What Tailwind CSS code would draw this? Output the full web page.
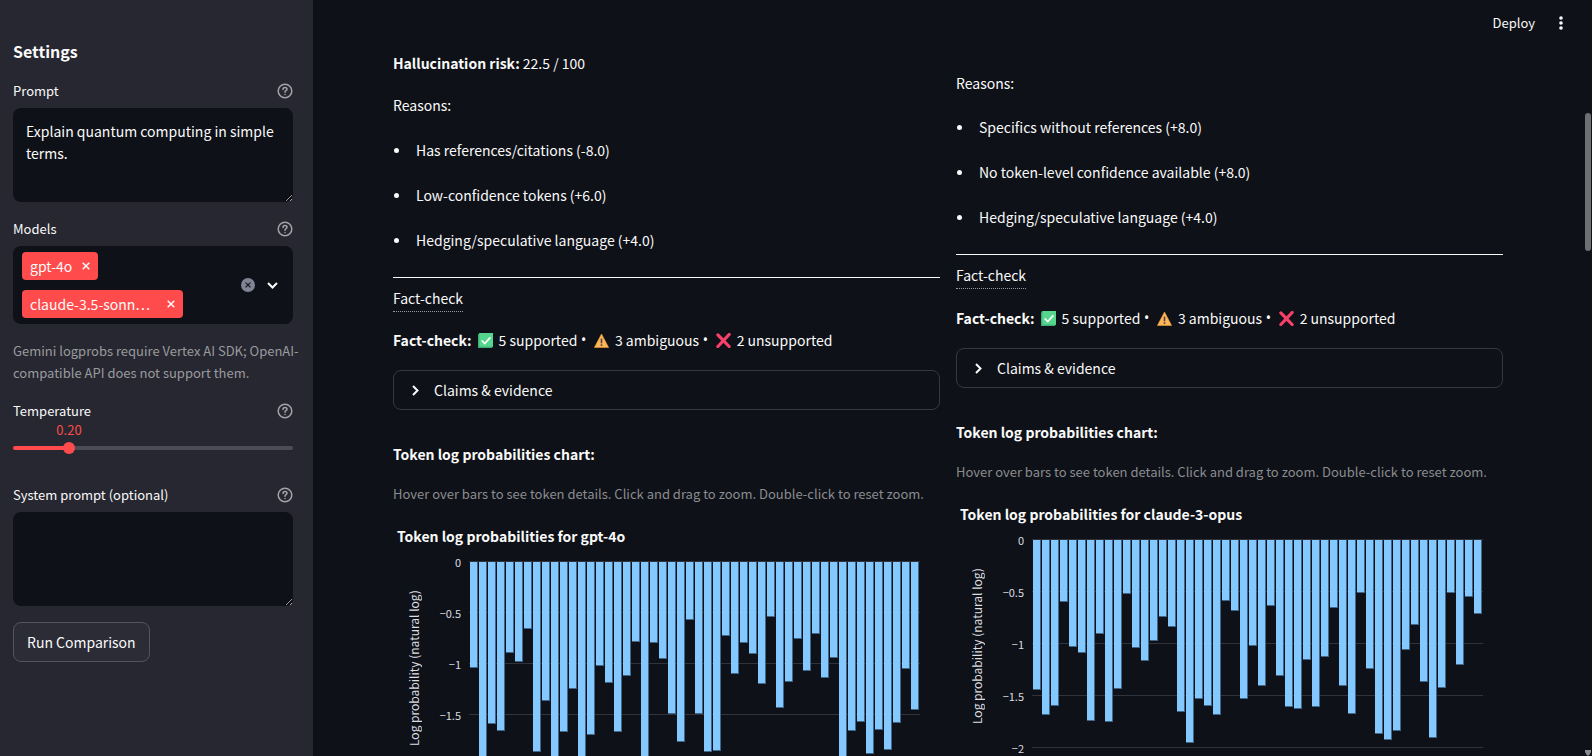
<!DOCTYPE html>
<html lang="en">
<head>
<meta charset="utf-8">
<meta name="viewport" content="width=device-width, initial-scale=1">
<title>Model comparison</title>
<script src="https://cdn.jsdelivr.net/npm/@tailwindcss/browser@4"></script>
</head>
<body class="flex h-screen overflow-hidden bg-[#0e1117] font-['Noto_Sans_CJK_SC','Noto_Sans',sans-serif] text-[14px] leading-[22px] text-[#fafafa]">

<svg class="hidden" aria-hidden="true">
  <symbol id="help" viewBox="0 0 16 16" fill="none" stroke="currentColor" stroke-width="1.5" stroke-linecap="round">
    <circle cx="8" cy="8" r="6.8"/><path d="M6 6.4C6 5.1 6.9 4.5 8 4.5s2 .7 2 1.8C10 7.7 8 7.7 8 9.2"/><path d="M8 11.4v.1"/>
  </symbol>
  <symbol id="cross" viewBox="0 0 8 8" fill="none" stroke="currentColor" stroke-width="1.5"><path d="M.7.7l6.6 6.6M7.3.7L.7 7.3"/></symbol>
  <symbol id="chevron" viewBox="0 0 7 11" fill="none" stroke="currentColor" stroke-width="2"><path d="M1 1l4.5 4.5L1 10"/></symbol>
  <symbol id="ok" viewBox="0 0 16 16"><path d="M1.5 0H16v14.5L14.5 16H0V1.5z" fill="#3fae78"/><path d="M1.5 0H16v14.5H1.5z" fill="#56d68d"/><path d="M4 8l3.2 3.2L13.2 4.6" fill="none" stroke="#fff" stroke-width="1.8"/></symbol>
  <symbol id="warn" viewBox="0 0 16 16"><path d="M8 1l7.6 14.5H.4z" fill="#ffb657" stroke="#f5a33f" stroke-width=".6"/><path d="M8 6v5" stroke="#4c4350" stroke-width="1.7"/><path d="M8 12v1.8" stroke="#4c4350" stroke-width="1.7"/></symbol>
  <symbol id="bad" viewBox="0 0 16 16"><path d="M2 2l12 12.4M14 1.6L2 14.4" stroke="#f9406b" stroke-width="3.4" stroke-linecap="round"/></symbol>
</svg>

<aside class="w-[313px] shrink-0 bg-[#262730] px-[13px] pt-[39px] pr-5">
  <h2 class="mb-[17px] text-[16px] leading-6 font-bold">Settings</h2>

  <div class="mb-[6px] flex h-[22px] items-center justify-between text-[13px]">
    <label for="prompt">Prompt</label>
    <button type="button" aria-label="Help for prompt" class="text-[#a3a4aa]"><svg class="size-4"><use href="#help"/></svg></button>
  </div>
  <textarea id="prompt" class="block h-[94px] w-full resize-y rounded-lg bg-[#0e1117] px-[13px] py-3 text-[14px] leading-[22px] [color-scheme:dark]">Explain quantum computing in simple terms.</textarea>

  <div class="mt-4 mb-[6px] flex h-[22px] items-center justify-between text-[13px]">
    <label for="models">Models</label>
    <button type="button" aria-label="Help for models" class="text-[#a3a4aa]"><svg class="size-4"><use href="#help"/></svg></button>
  </div>
  <div class="flex h-[78px] items-center rounded-lg bg-[#0e1117] pr-[15px] pl-[9px]">
    <div class="flex flex-1 flex-col items-start gap-[10px]">
      <span class="flex h-7 items-center gap-[10px] rounded bg-[#ff4b4b] px-2">gpt-4o<button type="button" aria-label="Remove gpt-4o"><svg class="size-2"><use href="#cross"/></svg></button></span>
      <span class="flex h-7 items-center gap-[17px] rounded bg-[#ff4b4b] px-2">claude-3.5-sonn…<button type="button" aria-label="Remove claude-3.5-sonnet"><svg class="size-2"><use href="#cross"/></svg></button></span>
    </div>
    <input id="models" role="combobox" aria-expanded="false" class="w-px bg-transparent outline-none">
    <button type="button" aria-label="Clear all" class="mr-[11px] flex size-[14px] items-center justify-center rounded-full bg-[#808495] text-[#0e1117]"><svg class="size-[6px]"><use href="#cross"/></svg></button>
    <button type="button" aria-label="Open list" class="flex w-3 justify-center"><svg class="h-[11px] w-[7px] rotate-90"><use href="#chevron"/></svg></button>
  </div>

  <p class="mt-4 text-[13px] leading-[22px] whitespace-nowrap text-[#9a9b9f]">Gemini logprobs require Vertex AI SDK; OpenAI-<br>compatible API does not support them.</p>

  <div class="mt-4 flex h-[22px] items-center justify-between text-[13px]">
    <label for="temp">Temperature</label>
    <button type="button" aria-label="Help for temperature" class="text-[#a3a4aa]"><svg class="size-4"><use href="#help"/></svg></button>
  </div>
  <div class="grid grid-cols-5 text-[13px] leading-4 text-[#ff4b4b]"><output for="temp" class="col-span-2 text-center">0.20</output></div>
  <div class="mt-1 grid h-3 items-center">
    <div class="col-start-1 row-start-1 h-1 rounded bg-[linear-gradient(to_right,#ff4b4b_20%,#4b4c56_20%)]"></div>
    <input id="temp" type="range" min="0" max="1" step="0.05" value="0.2" class="col-start-1 row-start-1 -mx-[6px] h-3 w-[calc(100%+12px)] appearance-none bg-transparent [&::-webkit-slider-thumb]:size-3 [&::-webkit-slider-thumb]:appearance-none [&::-webkit-slider-thumb]:rounded-full [&::-webkit-slider-thumb]:bg-[#ff4b4b]">
  </div>

  <div class="mt-[30px] mb-[6px] flex h-[22px] items-center justify-between text-[13px]">
    <label for="system">System prompt (optional)</label>
    <button type="button" aria-label="Help for system prompt" class="text-[#a3a4aa]"><svg class="size-4"><use href="#help"/></svg></button>
  </div>
  <textarea id="system" class="block h-[94px] w-full resize-y rounded-lg bg-[#0e1117] px-[13px] py-3 [color-scheme:dark]"></textarea>

  <button type="button" class="mt-4 h-10 rounded-lg border border-[#53545c] bg-[#2b2c36] px-[13px]">Run Comparison</button>
</aside>

<div class="relative min-w-0 flex-1">
  <header class="absolute top-0 right-0 flex h-[45px] items-center gap-6 pr-[29px] text-[13px]">
    <button type="button">Deploy</button>
    <button type="button" aria-label="Menu"><svg class="h-4 w-1" viewBox="0 0 4 16" fill="currentColor"><circle cx="2" cy="3" r="1.8"/><circle cx="2" cy="8" r="1.8"/><circle cx="2" cy="13" r="1.8"/></svg></button>
  </header>

  <main class="grid h-full grid-cols-2 grid-rows-[100%] gap-4 overflow-hidden pr-[89px] pl-20">
    <section class="min-w-0 pt-[52px]">
      <p class="mb-5"><strong>Hallucination risk:</strong> 22.5 / 100</p>
      <p>Reasons:</p>
      <ul class="mt-[23px] flex flex-col gap-[23px]">
        <li class="flex items-center gap-[17px] pl-px"><span class="size-[5px] rounded-full bg-current"></span>Has references/citations (-8.0)</li>
        <li class="flex items-center gap-[17px] pl-px"><span class="size-[5px] rounded-full bg-current"></span>Low-confidence tokens (+6.0)</li>
        <li class="flex items-center gap-[17px] pl-px"><span class="size-[5px] rounded-full bg-current"></span>Hedging/speculative language (+4.0)</li>
      </ul>
      <hr class="mt-[26px] mb-[9px] border-[#fafafa]">
      <div class="flex"><span class="border-b border-dotted border-[#999] pb-[2px]">Fact-check</span></div>
      <p class="mt-[17px] flex items-center whitespace-pre"><strong>Fact-check:</strong><svg class="mx-[6px] size-[15px]" role="img" aria-label="supported"><use href="#ok"/></svg>5 supported<span class="font-['Noto_Sans']"> • </span><svg class="mr-[6px] ml-1 size-[15px]" role="img" aria-label="ambiguous"><use href="#warn"/></svg>3 ambiguous<span class="font-['Noto_Sans']"> • </span><svg class="mr-[6px] ml-1 size-[15px]" role="img" aria-label="unsupported"><use href="#bad"/></svg>2 unsupported</p>
      <details class="mt-[19px] rounded-lg border border-[#36383e]"><summary class="flex h-[38px] list-none items-center gap-[15px] pl-[18px]"><svg class="h-[11px] w-[7px]"><use href="#chevron"/></svg>Claims &amp; evidence</summary></details>
      <p class="mt-[33px] font-bold">Token log probabilities chart:</p>
      <p class="mt-[18px] text-[13px] text-[#8b8c90]">Hover over bars to see token details. Click and drag to zoom. Double-click to reset zoom.</p>
      <h3 class="mt-5 pl-1 font-bold">Token log probabilities for gpt-4o</h3>
      <div class="mt-[14px] flex">
        <div class="flex w-[34px] justify-end pr-[3px] text-[12px]"><span class="h-[214px] rotate-180 text-center leading-[20px] text-[#dcdde0] [writing-mode:vertical-rl]">Log probability (natural log)</span></div>
        <div class="-mt-[9px] w-[34px] text-right text-[11px] leading-5 text-[#dcdde0]">
          <div class="h-[51px]">0</div><div class="h-[51px]">−0.5</div><div class="h-[51px]">−1</div><div class="h-[51px]">−1.5</div>
        </div>
        <div class="relative mr-5 ml-2 h-[260px] min-w-0 flex-1 border-t border-[#31333a]">
          <div class="absolute inset-x-0 top-[50px] flex flex-col gap-[50px]"><i class="h-px bg-[#31333a]"></i><i class="h-px bg-[#31333a]"></i><i class="h-px bg-[#31333a]"></i></div>
          <div class="relative flex items-start pl-px" data-bars="442 890 610 633 398 426 327 695 543 880 635 505 860 644 438 487 634 466 364 850 367 416 580 664 298 581 694 691 347 460 367 401 490 290 562 484 355 452 341 472 413 715 631 604 700 628 689 608 445 568" data-zero="125"></div>
        </div>
      </div>
    </section>

    <section class="min-w-0 pt-[72px]">
      <p>Reasons:</p>
      <ul class="mt-[22px] flex flex-col gap-[23px]">
        <li class="flex items-center gap-[17px] pl-px"><span class="size-[5px] rounded-full bg-current"></span>Specifics without references (+8.0)</li>
        <li class="flex items-center gap-[17px] pl-px"><span class="size-[5px] rounded-full bg-current"></span>No token-level confidence available (+8.0)</li>
        <li class="flex items-center gap-[17px] pl-px"><span class="size-[5px] rounded-full bg-current"></span>Hedging/speculative language (+4.0)</li>
      </ul>
      <hr class="mt-[26px] mb-[9px] border-[#fafafa]">
      <div class="flex"><span class="border-b border-dotted border-[#999] pb-[2px]">Fact-check</span></div>
      <p class="mt-[18px] flex items-center whitespace-pre"><strong>Fact-check:</strong><svg class="mx-[6px] size-[15px]" role="img" aria-label="supported"><use href="#ok"/></svg>5 supported<span class="font-['Noto_Sans']"> • </span><svg class="mr-[6px] ml-1 size-[15px]" role="img" aria-label="ambiguous"><use href="#warn"/></svg>3 ambiguous<span class="font-['Noto_Sans']"> • </span><svg class="mr-[6px] ml-1 size-[15px]" role="img" aria-label="unsupported"><use href="#bad"/></svg>2 unsupported</p>
      <details class="mt-[19px] rounded-lg border border-[#36383e]"><summary class="flex h-[38px] list-none items-center gap-[15px] pl-[18px]"><svg class="h-[11px] w-[7px]"><use href="#chevron"/></svg>Claims &amp; evidence</summary></details>
      <p class="mt-[33px] font-bold">Token log probabilities chart:</p>
      <p class="mt-[18px] text-[13px] text-[#8b8c90]">Hover over bars to see token details. Click and drag to zoom. Double-click to reset zoom.</p>
      <h3 class="mt-5 pl-1 font-bold">Token log probabilities for claude-3-opus</h3>
      <div class="mt-[14px] flex">
        <div class="flex w-[34px] justify-end pr-[3px] text-[12px]"><span class="h-[214px] rotate-180 text-center leading-[20px] text-[#dcdde0] [writing-mode:vertical-rl]">Log probability (natural log)</span></div>
        <div class="-mt-[9px] w-[34px] text-right text-[11px] leading-5 text-[#dcdde0]">
          <div class="h-[52px]">0</div><div class="h-[52px]">−0.5</div><div class="h-[52px]">−1</div><div class="h-[52px]">−1.5</div><div class="h-[52px]">−2</div>
        </div>
        <div class="relative mr-5 ml-2 h-[260px] min-w-0 flex-1 border-t border-[#31333a]">
          <div class="absolute inset-x-0 top-[51px] flex flex-col gap-[51px]"><i class="h-px bg-[#31333a]"></i><i class="h-px bg-[#31333a]"></i><i class="h-px bg-[#31333a]"></i><i class="h-px bg-[#31333a]"></i></div>
          <div class="relative flex items-start pl-px" data-bars="568 643 616 304 439 458 661 401 664 565 280 442 481 422 349 379 634 727 595 616 643 301 332 595 436 556 316 527 619 626 479 619 469 322 556 640 277 505 700 719 691 448 373 545 712 563 277 494 289 340" data-zero="119"></div>
        </div>
      </div>
    </section>
  </main>

  <div class="absolute top-[113px] right-px h-[138px] w-[6px] rounded-full bg-[#6e6f73]"></div>
  <svg class="absolute right-px bottom-0 h-[6px] w-[6px]" viewBox="0 0 6 6" fill="#8a8b8f" aria-hidden="true"><path d="M0 0h6v2L4 5.500H2L0 2z"/></svg>
</div>

<script>
  // Each value is a bar's lower edge in thirds of a pixel, measured like data-zero.
  document.querySelectorAll('[data-bars]').forEach(function (plot) {
    var zero = Number(plot.dataset.zero);
    plot.dataset.bars.split(' ').forEach(function (v) {
      var bar = document.createElement('div');
      bar.className = 'mr-px min-w-0 flex-1 border-r border-b border-[#41668a] bg-[#83c9ff]';
      bar.style.height = Math.round((v - zero) / 3) + 'px';
      plot.appendChild(bar);
    });
  });
</script>
</body>
</html>
